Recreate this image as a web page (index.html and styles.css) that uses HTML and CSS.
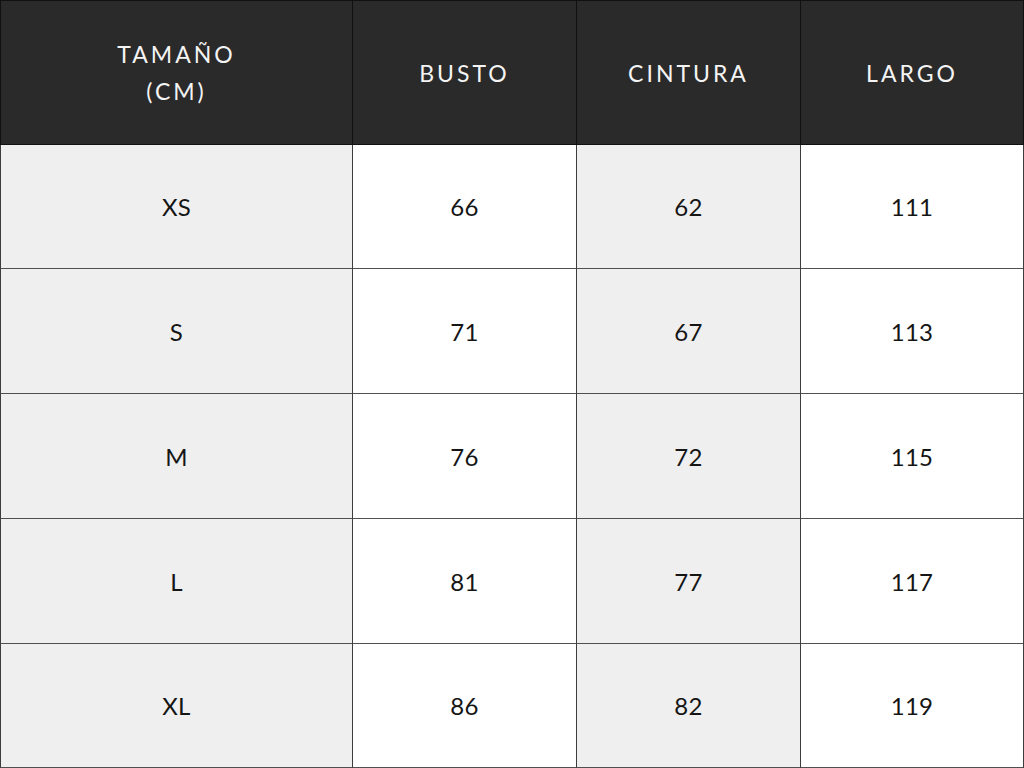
FILE: index.html
```html
<!DOCTYPE html>
<html lang="es">
<head>
<meta charset="utf-8">
<title>Tabla de tallas</title>
<link rel="stylesheet" href="styles.css">
</head>
<body>
<div class="size-table" role="table">
  <div class="cell head first" role="columnheader">TAMAÑO<br>(CM)</div>
  <div class="cell head" role="columnheader">BUSTO</div>
  <div class="cell head" role="columnheader">CINTURA</div>
  <div class="cell head" role="columnheader">LARGO</div>

  <div class="cell shade first">XS</div><div class="cell">66</div><div class="cell shade">62</div><div class="cell">111</div>
  <div class="cell shade first">S</div><div class="cell">71</div><div class="cell shade">67</div><div class="cell">113</div>
  <div class="cell shade first">M</div><div class="cell">76</div><div class="cell shade">72</div><div class="cell">115</div>
  <div class="cell shade first">L</div><div class="cell">81</div><div class="cell shade">77</div><div class="cell">117</div>
  <div class="cell shade first">XL</div><div class="cell">86</div><div class="cell shade">82</div><div class="cell">119</div>
</div>
</body>
</html>
```

FILE: styles.css
```css
html, body {
  margin: 0;
  padding: 0;
  width: 1024px;
  height: 768px;
  overflow: hidden;
  background: #ffffff;
}

.size-table {
  width: 1024px;
  height: 768px;
  display: grid;
  grid-template-columns: 353px 224px 224px 223px;
  grid-template-rows: 145px 124px 125px 125px 125px 124px;
  font-family: "Lato", "Open Sans", sans-serif;
  color: #151515;
}

.cell {
  box-sizing: border-box;
  display: flex;
  align-items: center;
  justify-content: center;
  text-align: center;
  background: #ffffff;
  border-right: 1px solid #3c3c3c;
  border-bottom: 1px solid #505050;
  font-size: 24px;
  letter-spacing: 0.3px;
}

.cell.first {
  border-left: 1px solid #3c3c3c;
}

.cell.shade {
  background: #efefef;
}

.cell.head {
  background: #2a2a2a;
  color: #f4f4f4;
  font-size: 23px;
  letter-spacing: 3px;
  line-height: 37px;
  border-top: 1px solid #111111;
  border-right-color: #111111;
  border-bottom-color: #111111;
  padding-top: 1px;
}

.cell.head.first {
  border-left-color: #111111;
}
```
